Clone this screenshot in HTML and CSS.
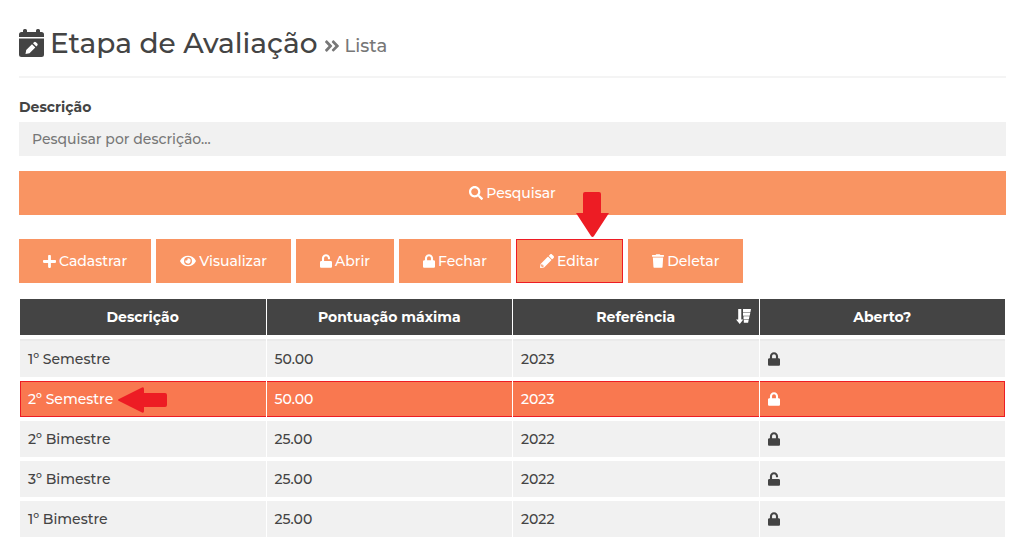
FILE: index.html
```html
<!DOCTYPE html>
<html lang="pt-br">
<head>
  <meta charset="UTF-8" />
  <meta name="viewport" content="width=device-width, initial-scale=1.0" />
  <title>Etapa de Avaliação</title>
  <link rel="stylesheet" href="styles.css">
</head>
<body>
  <!-- Icons used by the buttons and the table -->
  <svg class="sprite" aria-hidden="true">
    <symbol id="lock" viewBox="0 0 448 512"><path d="M400 224h-24v-72C376 68.2 307.8 0 224 0S72 68.2 72 152v72H48c-26.5 0-48 21.5-48 48v192c0 26.5 21.5 48 48 48h352c26.5 0 48-21.5 48-48V272c0-26.5-21.5-48-48-48zm-104 0H152v-72c0-39.7 32.3-72 72-72s72 32.3 72 72v72z"/></symbol>
    <symbol id="unlock" viewBox="0 0 448 512"><path d="M400 256H152V152.9c0-39.6 31.7-72.5 71.3-72.9 40-.4 72.7 32.1 72.7 72v16c0 13.3 10.7 24 24 24h32c13.3 0 24-10.7 24-24v-16C376 68 307.5-.3 223.5 0 139.5.3 72 69.5 72 153.5V256H48c-26.5 0-48 21.5-48 48v160c0 26.5 21.5 48 48 48h352c26.5 0 48-21.5 48-48V304c0-26.5-21.5-48-48-48z"/></symbol>
  </svg>

  <div class="page">
    <div class="header">
      <svg class="calendar" width="25" height="28" viewBox="0 0 25 28" fill="currentColor">
        <path d="M0 8V5.5Q0 3 2.5 3H4V1.5Q4 0 5.5 0H6.5Q8 0 8 1.5V3H17V1.5Q17 0 18.5 0H19.5Q21 0 21 1.5V3H22.5Q25 3 25 5.5V8Z"/>
        <path fill-rule="evenodd" d="M0 9.5H25V25.5Q25 28 22.5 28H2.5Q0 28 0 25.5ZM6.5 25L10.5 24.3L16.3 18.5L13 15.2L7.2 21ZM14 14.2L17.3 17.5L18.3 16.5Q19.2 15.5 18.3 14.6L16.9 13.2Q16 12.3 15 13.2Z"/>
      </svg>
      <h1 class="title">Etapa de Avaliação</h1>
      <svg class="chevrons" width="16" height="18" viewBox="0 0 448 512" fill="currentColor"><path d="M224.3 273l-136 136c-9.4 9.4-24.6 9.4-33.9 0l-22.6-22.6c-9.4-9.4-9.4-24.6 0-33.9l96.4-96.4-96.4-96.4c-9.4-9.4-9.4-24.6 0-33.9L54.3 103c9.4-9.4 24.6-9.4 33.9 0l136 136c9.5 9.4 9.5 24.6.1 34zm192-34l-136-136c-9.4-9.4-24.6-9.4-33.9 0l-22.6 22.6c-9.4 9.4-9.4 24.6 0 33.9l96.4 96.4-96.4 96.4c-9.4 9.4-9.4 24.6 0 33.9l22.6 22.6c9.4 9.4 24.6 9.4 33.9 0l136-136c9.4-9.2 9.4-24.4 0-33.8z"/></svg>
      <span class="subtitle">Lista</span>
    </div>

    <form class="search">
      <label for="descricao">Descrição</label>
      <input type="text" id="descricao" placeholder="Pesquisar por descrição...">
      <button type="button" class="btn">
        <svg width="14" height="14" viewBox="0 0 512 512"><path d="M505 442.7L405.3 343c-4.5-4.5-10.6-7-17-7H372c27.6-35.3 44-79.7 44-128C416 93.1 322.9 0 208 0S0 93.1 0 208s93.1 208 208 208c48.3 0 92.7-16.4 128-44v16.3c0 6.4 2.5 12.5 7 17l99.7 99.7c9.4 9.4 24.6 9.4 33.9 0l28.3-28.3c9.4-9.4 9.4-24.6.1-34zM208 336c-70.7 0-128-57.2-128-128 0-70.7 57.2-128 128-128 70.7 0 128 57.2 128 128 0 70.7-57.2 128-128 128z"/></svg>
        Pesquisar
      </button>
    </form>

    <div class="action-bar">
      <button type="button" class="btn">
        <svg width="13" height="15" viewBox="0 0 448 512"><path d="M416 208H272V64c0-17.67-14.33-32-32-32h-32c-17.67 0-32 14.33-32 32v144H32c-17.67 0-32 14.33-32 32v32c0 17.67 14.33 32 32 32h144v144c0 17.67 14.33 32 32 32h32c17.67 0 32-14.33 32-32V304h144c17.67 0 32-14.33 32-32v-32c0-17.67-14.33-32-32-32z"/></svg>
        Cadastrar
      </button>
      <button type="button" class="btn">
        <svg width="16" height="14" viewBox="0 0 576 512"><path d="M572.52 241.4C518.29 135.59 410.93 64 288 64S57.68 135.64 3.48 241.41a32.35 32.35 0 0 0 0 29.19C57.71 376.41 165.07 448 288 448s230.32-71.64 284.52-177.41a32.35 32.35 0 0 0 0-29.19zM288 400a144 144 0 1 1 144-144 143.93 143.93 0 0 1-144 144zm0-240a95.31 95.31 0 0 0-25.31 3.79 47.85 47.85 0 0 1-66.9 66.9A95.78 95.78 0 1 0 288 160z"/></svg>
        Visualizar
      </button>
      <button type="button" class="btn">
        <svg width="12" height="14"><use href="#unlock"/></svg>
        Abrir
      </button>
      <button type="button" class="btn">
        <svg width="12" height="14"><use href="#lock"/></svg>
        Fechar
      </button>
      <button type="button" class="btn marked">
        <svg width="14" height="14" viewBox="0 0 512 512"><path d="M497.9 142.1l-46.1 46.1c-4.7 4.7-12.3 4.7-17 0l-111-111c-4.7-4.7-4.7-12.3 0-17l46.1-46.1c18.7-18.7 49.1-18.7 67.9 0l60.1 60.1c18.8 18.7 18.8 49.1 0 67.9zM284.2 99.8L21.6 362.4.4 483.9c-2.9 16.4 11.4 30.6 27.8 27.8l121.5-21.3 262.6-262.6c4.7-4.7 4.7-12.3 0-17l-111-111c-4.8-4.7-12.4-4.7-17.1 0zM88 424h48v36.3l-64.5 11.3-31.1-31.1L51.7 376H88v48z"/></svg>
        Editar
        <svg class="arrow-down" width="33" height="45" viewBox="0 0 33 45"><path d="M7 2Q7 0 9 0H23Q25 0 25 2V21H33L18 44Q16.5 46 15 44L0 21H7Z"/></svg>
      </button>
      <button type="button" class="btn">
        <svg width="12" height="14" viewBox="0 0 448 512"><path d="M432 32H312l-9.4-18.7A24 24 0 0 0 281.1 0H166.8a23.72 23.72 0 0 0-21.4 13.3L136 32H16A16 16 0 0 0 0 48v32a16 16 0 0 0 16 16h416a16 16 0 0 0 16-16V48a16 16 0 0 0-16-16zM53.2 467a48 48 0 0 0 47.9 45h245.8a48 48 0 0 0 47.9-45L416 128H32z"/></svg>
        Deletar
      </button>
    </div>

    <table>
      <thead>
        <tr>
          <th>Descrição</th>
          <th>Pontuação máxima</th>
          <th>
            Referência
            <svg class="sort" width="15" height="15" viewBox="0 0 15 15" fill="currentColor"><path d="M2.2 0H5.3V10.5H7.3L3.75 15L0 10.5H2.2ZM7 0H15L14.4 3.2H7ZM7 3.7H14.3L13.7 6.7H7ZM7.5 7.2H13.5L12.9 10.2H7.5ZM7.8 10.7H12.7L12.1 13.8H7.8Z"/></svg>
          </th>
          <th>Aberto?</th>
        </tr>
      </thead>
      <tbody>
        <tr>
          <td>1º Semestre</td>
          <td>50.00</td>
          <td>2023</td>
          <td><svg width="12" height="14"><use href="#lock"/></svg></td>
        </tr>
        <tr class="selected">
          <td>2º Semestre <svg class="arrow-left" width="49" height="26" viewBox="0 0 49 26"><path d="M1 12L23 1Q26 -1 26 2V6H47Q49 6 49 8V18Q49 20 47 20H26V24Q26 27 23 25L1 14Q-1 13 1 12Z"/></svg></td>
          <td>50.00</td>
          <td>2023</td>
          <td><svg width="12" height="14"><use href="#lock"/></svg></td>
        </tr>
        <tr>
          <td>2º Bimestre</td>
          <td>25.00</td>
          <td>2022</td>
          <td><svg width="12" height="14"><use href="#lock"/></svg></td>
        </tr>
        <tr>
          <td>3º Bimestre</td>
          <td>25.00</td>
          <td>2022</td>
          <td><svg width="12" height="14"><use href="#unlock"/></svg></td>
        </tr>
        <tr>
          <td>1º Bimestre</td>
          <td>25.00</td>
          <td>2022</td>
          <td><svg width="12" height="14"><use href="#lock"/></svg></td>
        </tr>
      </tbody>
    </table>
  </div>
</body>
</html>
```
FILE: styles.css
```css
* {
  box-sizing: border-box;
}
body {
  font-family: Montserrat, Inter, sans-serif;
  font-size: 14px;
  font-weight: 500;
  line-height: 20px;
  background: #fff;
  color: #444;
  margin: 0;
}
.sprite {
  display: none;
}
.page {
  padding: 20px 18px 0 19px;
}
.header {
  display: flex;
  align-items: center;
  height: 58px;
  padding-bottom: 11px;
  border-bottom: 2px solid #f4f4f4;
  margin-bottom: 20px;
}
.title {
  font-size: 28px;
  font-weight: 500;
  line-height: 44px;
  margin: 0 6px 0 6px;
}
.chevrons,
.subtitle {
  color: #777;
  margin-top: 6px;
}
.subtitle {
  font-size: 18px;
  margin-left: 5px;
}
.search {
  display: flex;
  flex-direction: column;
}
label {
  font-weight: 700;
  line-height: 18px;
  margin-bottom: 6px;
}
input {
  height: 34px;
  padding: 0 13px;
  border: none;
  background-color: #f1f1f1;
  color: #444;
  font: inherit;
  margin-bottom: 15px;
}
input::placeholder {
  color: #777;
}
.btn {
  position: relative;
  display: flex;
  align-items: center;
  justify-content: center;
  gap: 3px;
  height: 44px;
  padding: 0 24px;
  border: none;
  background-color: #f99462;
  color: #fff;
  font: inherit;
  cursor: pointer;
}
.btn svg,
td svg {
  fill: currentColor;
}
.action-bar {
  display: flex;
  gap: 5px;
  margin-top: 24px;
}
.marked {
  outline: 1px solid #ed1c24;
  outline-offset: -1px;
}
.btn .arrow-down,
td .arrow-left {
  position: absolute;
  fill: #ed1c24;
}
.btn .arrow-down {
  left: 60px;
  top: -47px;
}
table {
  width: 100%;
  table-layout: fixed;
  border-spacing: 1px 4px;
  margin-top: 12px;
}
th, td {
  position: relative;
  height: 36px;
  padding: 0 8px;
}
th {
  background-color: #444;
  color: #fff;
  font-weight: 700;
}
.sort {
  position: absolute;
  right: 8px;
  top: 10px;
}
td {
  background-color: #f1f1f1;
}
td svg {
  display: block;
}
tbody tr:first-child td {
  height: 38px;
  border-top: 2px solid #ebebeb;
}
tbody .selected td {
  background-color: #f97850;
  border-top: 1px solid #ed1c24;
  border-bottom: 1px solid #ed1c24;
  color: #fff;
}
.selected td:first-child {
  box-shadow: inset 1px 0 #ed1c24;
}
.selected td:last-child {
  box-shadow: inset -1px 0 #ed1c24;
}
td .arrow-left {
  left: 98px;
  top: 5px;
}
```
